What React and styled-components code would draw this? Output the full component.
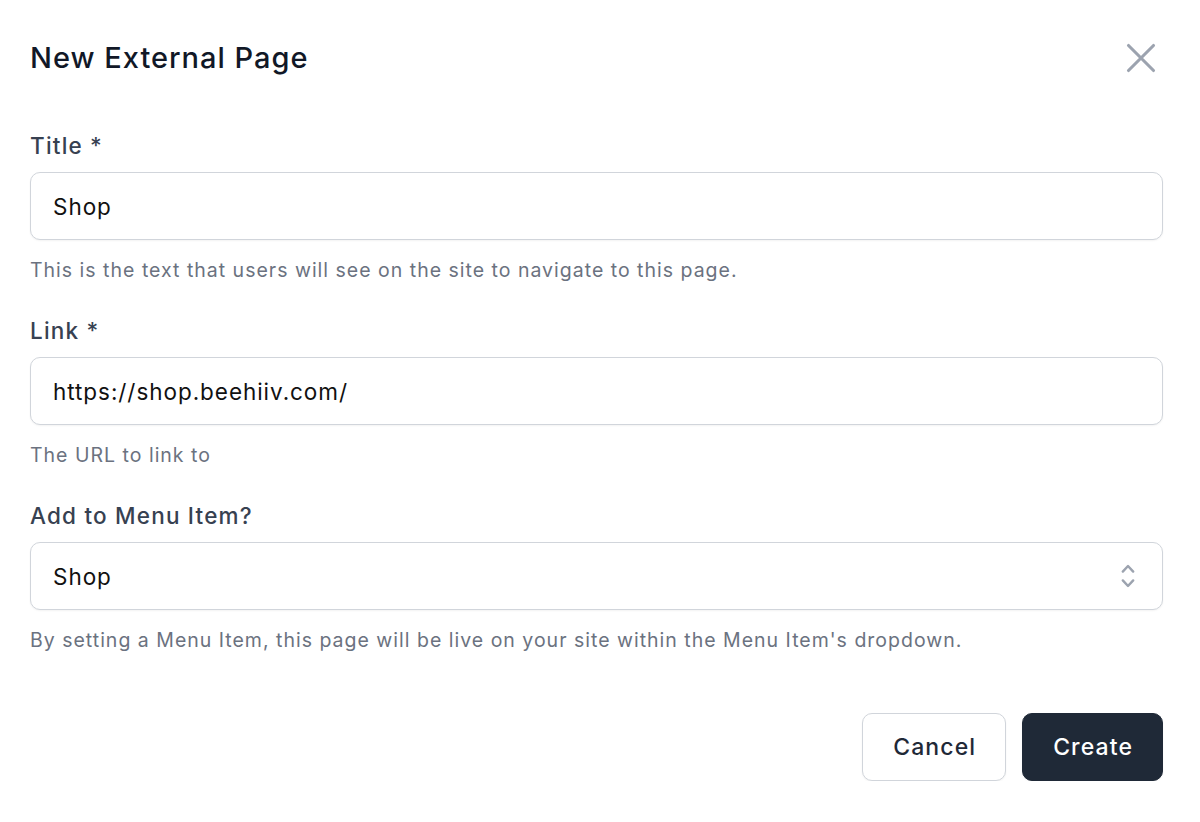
import React from "react";
import styled, { createGlobalStyle } from "styled-components";

const Global = createGlobalStyle`
  html, body { margin: 0; padding: 0; background: #ffffff; }
  body { font-family: Inter, "Noto Sans", sans-serif; -webkit-font-smoothing: antialiased; }
  * { box-sizing: border-box; }
`;

const Panel = styled.div`
  width: 1200px;
  padding: 38px 37px 0 30px;
  display: flex;
  flex-direction: column;
`;

const Header = styled.div`
  display: flex;
  align-items: center;
  justify-content: space-between;
  height: 40px;
  margin-bottom: 52px;
`;

const Heading = styled.h2`
  margin: 0;
  font-size: 29px;
  line-height: 40px;
  font-weight: 500;
  color: #111827;
  letter-spacing: 1px;
`;

const CloseButton = styled.button`
  border: 0;
  background: transparent;
  padding: 0;
  margin-right: -3px;
  width: 50px;
  height: 50px;
  display: flex;
  align-items: center;
  justify-content: center;
  color: #9ca3af;
  cursor: pointer;
`;

const Field = styled.div`
  display: flex;
  flex-direction: column;
  margin-bottom: ${(p) => p.$gap}px;
`;

const Label = styled.label`
  font-size: 22.5px;
  line-height: 32px;
  font-weight: 500;
  color: #374151;
  letter-spacing: 1.2px;
  margin-bottom: 10px;
`;

const Control = styled.div`
  position: relative;
  height: 68px;
  border: 1.5px solid #d1d5db;
  border-radius: 10px;
  box-shadow: 0 1px 2px rgba(0, 0, 0, 0.05);
  display: flex;
  align-items: center;
  padding: 0 22px;
  font-size: 22.5px;
  letter-spacing: 0.95px;
  color: #111111;
  background: #fff;
`;

const ChevronSlot = styled.span`
  position: absolute;
  right: 18px;
  top: 50%;
  transform: translateY(-50%);
  display: flex;
  color: #9ca3af;
`;

const Help = styled.p`
  margin: 16px 0 0;
  font-size: 19.5px;
  line-height: 28px;
  letter-spacing: 1px;
  color: #6b7280;
`;

const Actions = styled.div`
  display: flex;
  justify-content: flex-end;
  gap: 16px;
  margin-top: 59px;
`;

const Button = styled.button`
  height: 68px;
  padding: 0 29px 0 30px;
  border-radius: 10px;
  font-family: inherit;
  font-size: 23px;
  font-weight: 500;
  letter-spacing: 1.1px;
  cursor: pointer;
  border: 1.5px solid ${(p) => (p.$primary ? "#1f2937" : "#d1d5db")};
  background: ${(p) => (p.$primary ? "#1f2937" : "#ffffff")};
  color: ${(p) => (p.$primary ? "#ffffff" : "#1f2937")};
  box-shadow: 0 1px 2px rgba(0, 0, 0, 0.05);
`;

const XIcon = () => (
  <svg width="50" height="50" viewBox="0 0 24 24" fill="none" stroke="currentColor" strokeWidth="1.5" strokeLinecap="round" strokeLinejoin="round">
    <path d="M6 18L18 6M6 6l12 12" />
  </svg>
);

const UpDownIcon = () => (
  <svg width="32" height="32" viewBox="0 0 20 20" fill="currentColor">
    <path fillRule="evenodd" d="M10 3a.75.75 0 01.55.24l3.25 3.5a.75.75 0 11-1.1 1.02L10 4.852 7.3 7.76a.75.75 0 01-1.1-1.020l3.25-3.5A.75.75 0 0110 3zm-3.76 9.2a.75.75 0 011.06.04l2.7 2.908 2.7-2.908a.75.75 0 111.1 1.02l-3.25 3.5a.75.75 0 01-1.1 0l-3.25-3.5a.75.75 0 01.04-1.06z" clipRule="evenodd" />
  </svg>
);

export default function App() {
  return (
    <>
      <Global />
      <Panel>
        <Header>
          <Heading>New External Page</Heading>
          <CloseButton aria-label="Close">
            <XIcon />
          </CloseButton>
        </Header>

        <Field $gap={31}>
          <Label>Title *</Label>
          <Control>Shop</Control>
          <Help>This is the text that users will see on the site to navigate to this page.</Help>
        </Field>

        <Field $gap={31}>
          <Label>Link *</Label>
          <Control>https://shop.beehiiv.com/</Control>
          <Help>The URL to link to</Help>
        </Field>

        <Field $gap={0}>
          <Label>Add to Menu Item?</Label>
          <Control>
            Shop
            <ChevronSlot>
              <UpDownIcon />
            </ChevronSlot>
          </Control>
          <Help>By setting a Menu Item, this page will be live on your site within the Menu Item's dropdown.</Help>
        </Field>

        <Actions>
          <Button>Cancel</Button>
          <Button $primary>Create</Button>
        </Actions>
      </Panel>
    </>
  );
}
